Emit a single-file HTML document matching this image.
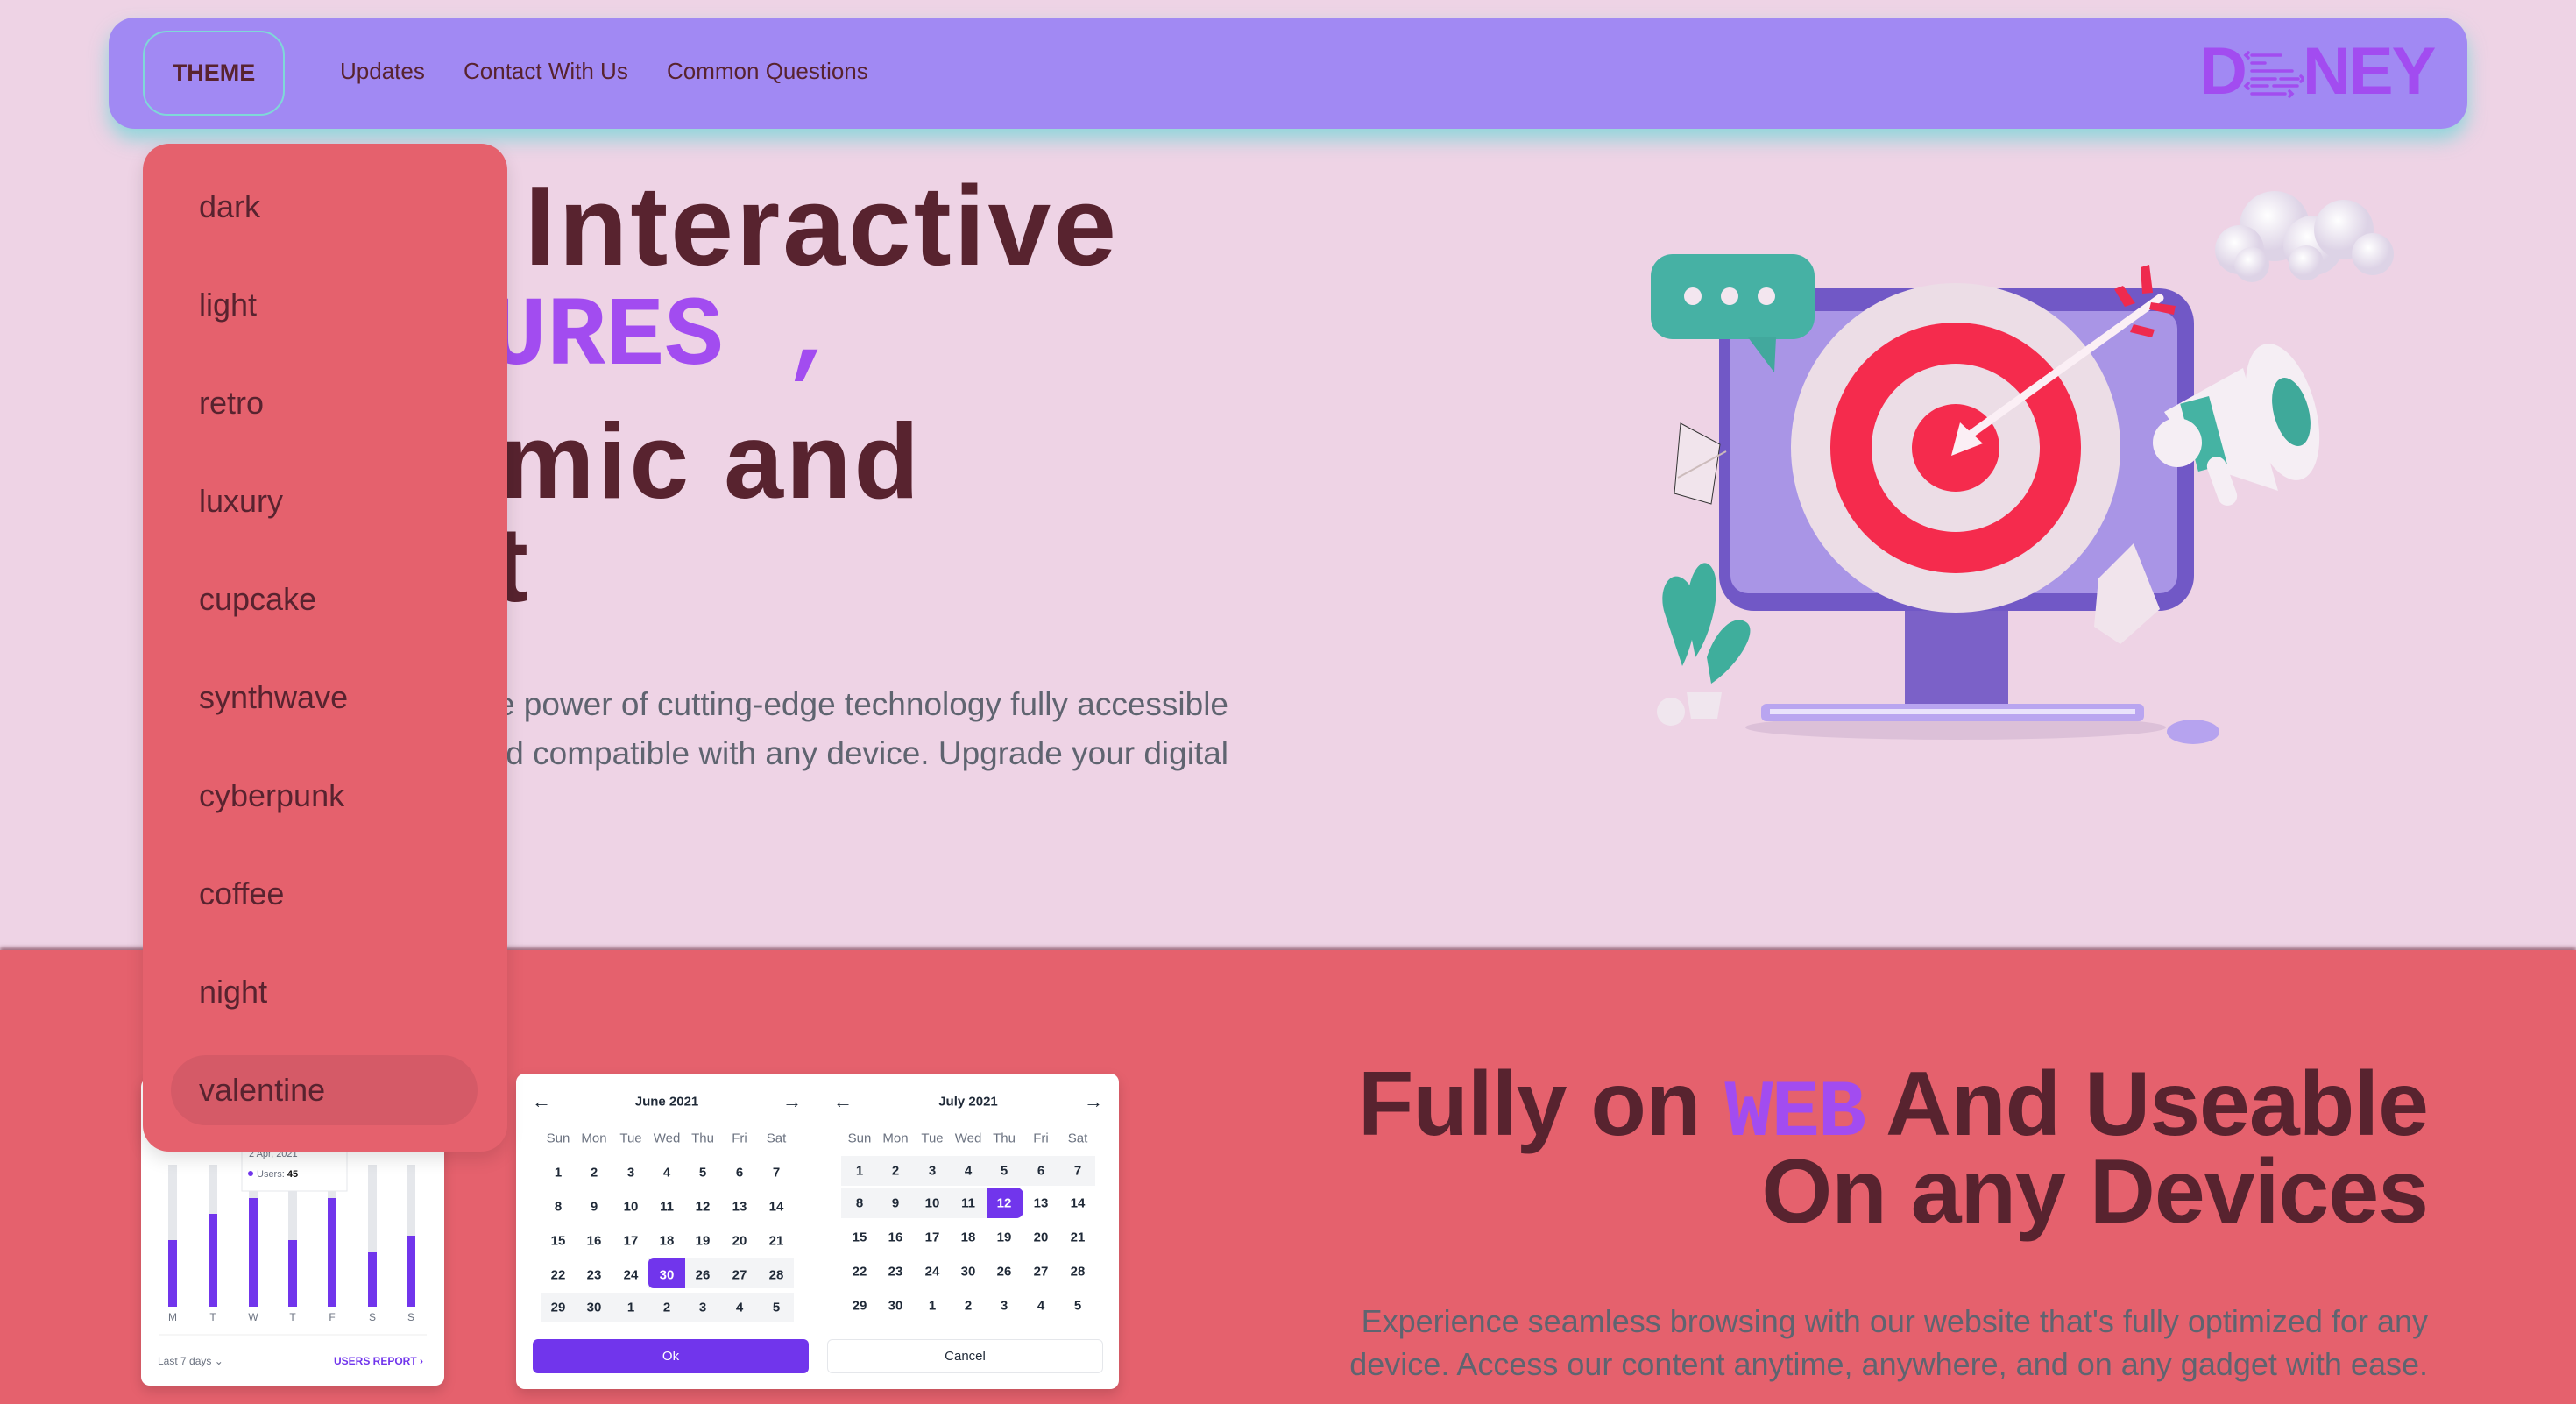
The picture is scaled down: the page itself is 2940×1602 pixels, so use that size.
<!DOCTYPE html>
<html><head><meta charset="utf-8">
<style>
*{margin:0;padding:0;box-sizing:border-box}
body{width:2940px;height:1602px;overflow:hidden;background:#eed3e5;font-family:"Liberation Sans",sans-serif;position:relative;color:#58232f}
.abs{position:absolute}
.nav{left:124px;top:20px;width:2692px;height:127px;background:#a189f3;border-radius:30px;box-shadow:0 12px 22px rgba(110,215,215,.75)}
.theme{left:163px;top:35px;width:162px;height:97px;border:2px solid #7fd8d8;border-radius:28px;font-weight:bold;font-size:27px;display:flex;align-items:center;justify-content:center;color:#58232f}
.link{top:66px;font-size:26px;color:#58232f}
.h1{position:absolute;font-weight:bold;font-size:122px;letter-spacing:3px;white-space:nowrap;text-align:right;line-height:1}
.pix{font-family:"Liberation Mono",monospace;font-weight:bold;color:#a24cf0}
.dd{left:163px;top:164px;width:416px;height:1150px;background:#e5616d;border-radius:30px;z-index:5;box-shadow:0 8px 20px rgba(0,0,0,.12)}
.dd div{position:absolute;left:64px;font-size:36px;color:#58232f}
.sec{left:0;top:1084px;width:2940px;height:518px;background:#e5616d;box-shadow:0 -3px 4px rgba(90,30,45,.55)}
.card{background:#fff;border-radius:10px;box-shadow:0 6px 14px rgba(0,0,0,.15)}
.cal{font-size:15px;color:#1f2937;font-weight:bold}
.cal span{position:absolute;transform:translate(-50%,-50%)}
.hd{color:#6b7280;font-weight:normal}
</style></head><body>

<div class="abs nav"></div>
<div class="abs theme">THEME</div>
<div class="abs link" style="left:388px">Updates</div>
<div class="abs link" style="left:529px">Contact With Us</div>
<div class="abs link" style="left:761px">Common Questions</div>

<!-- logo -->
<div class="abs" style="left:2510px;top:44px;font-weight:bold;font-size:76px;color:#a24cf0;line-height:1">D</div>
<svg class="abs" style="left:2560px;top:58px" width="70" height="56" viewBox="0 0 70 56" stroke="#a24cf0" stroke-width="3.5" stroke-linecap="round" fill="none">
<path d="M6 2l-3 3 3 3M10 5h33M10 14h15M10 23h46M10 32h27M43 32h20M66 29l3 3-3 3M6 37l-3 3 3 3M10 40h18M35 40h27M10 49h38M53 46l3 3-3 3"/></svg>
<div class="abs" style="left:2628px;top:44px;font-weight:bold;font-size:76px;color:#a24cf0;line-height:1;letter-spacing:-2px">NEY</div>

<!-- hero heading (clipped left of dropdown) -->
<div class="abs" style="left:579px;top:150px;width:900px;height:800px;overflow:hidden">
<div class="h1" style="right:202px;top:44px;font-size:129px">Discover Interactive</div>
<div class="h1 pix" style="right:519px;top:180px;font-size:112px;letter-spacing:0">FEATURES ,</div>
<div class="h1" style="right:427px;top:315px">Dynamic and</div>
<div class="h1" style="right:873px;top:433px">Content</div>
<div style="position:absolute;right:77px;top:626px;font-size:37px;color:#5f6470;text-align:right;white-space:nowrap;line-height:56px">Unlock the power of cutting-edge technology fully accessible<br>and compatible with any device. Upgrade your digital</div>
</div>

<!-- illustration -->
<svg class="abs" style="left:1860px;top:200px" width="900" height="660" viewBox="1860 200 900 660">
<defs><radialGradient id="cl" cx=".4" cy=".35"><stop offset="0" stop-color="#fff"/><stop offset="1" stop-color="#ddd3e6"/></radialGradient></defs>
<ellipse cx="2232" cy="830" rx="240" ry="14" fill="#dcc0d8"/>
<rect x="1962" y="329" width="542" height="368" rx="40" fill="#7158c6"/>
<rect x="1975" y="355" width="510" height="322" rx="20" fill="#a995e6"/>
<rect x="2174" y="697" width="118" height="106" fill="#7b61c8"/>
<rect x="2010" y="803" width="437" height="20" rx="6" fill="#b9a5f0"/>
<rect x="2020" y="809" width="417" height="6" fill="#e9e2fb"/>
<ellipse cx="2503" cy="835" rx="30" ry="14" fill="#b6a3ef"/>
<circle cx="2232" cy="511" r="188" fill="#ecdde6"/>
<circle cx="2232" cy="511" r="143" fill="#f52b4d"/>
<circle cx="2232" cy="511" r="96" fill="#ecdde6"/>
<circle cx="2232" cy="511" r="50" fill="#f52b4d"/>
<line x1="2240" y1="502" x2="2465" y2="340" stroke="#fbeff5" stroke-width="9" stroke-linecap="round"/>
<path d="M2227 520l10-38 26 24z" fill="#fbeff5"/>
<path d="M2425 350l-12-20 10-4 14 20zM2445 335l-2-30 10-3 4 32zM2455 345l28 4-2 10-28-6zM2435 370l24 6-3 9-25-6z" fill="#ef2a4e"/>
<rect x="1884" y="290" width="187" height="97" rx="25" fill="#46b1a4"/>
<path d="M1995 385l30 40 2-40z" fill="#42a89d"/>
<circle cx="1932" cy="338" r="10" fill="#f3e6ef"/><circle cx="1974" cy="338" r="10" fill="#f3e6ef"/><circle cx="2016" cy="338" r="10" fill="#f3e6ef"/>
<g fill="url(#cl)"><circle cx="2596" cy="258" r="40"/><circle cx="2556" cy="285" r="28"/><circle cx="2640" cy="280" r="34"/><circle cx="2675" cy="262" r="34"/><circle cx="2708" cy="290" r="24"/><circle cx="2632" cy="300" r="20"/><circle cx="2570" cy="302" r="20"/></g>
<path d="M2470 470l90-50 40 140-90-30z" fill="#f5eef4"/>
<ellipse cx="2605" cy="470" rx="38" ry="80" transform="rotate(-15 2605 470)" fill="#f5eef4"/>
<ellipse cx="2615" cy="470" rx="20" ry="40" transform="rotate(-15 2615 470)" fill="#3fa99a"/>
<rect x="2498" y="455" width="34" height="80" transform="rotate(-15 2515 495)" fill="#45b3a3"/>
<circle cx="2485" cy="505" r="28" fill="#f5eef4"/>
<rect x="2525" y="520" width="22" height="58" rx="11" transform="rotate(-20 2536 549)" fill="#f5eef4"/>
<path d="M1918 483l45 24-10 68-42-12z" fill="#f1e4ec" stroke="#333" stroke-width="1"/>
<path d="M1915 545l55-30" stroke="#cbb" stroke-width="2"/>
<path d="M2395 660l40-40 30 75-45 40-30-20z" fill="#f1e4ec"/>
<path d="M1900 700c-10-30 10-60 30-30 10 20 5 60-10 90zM1925 700c0-50 20-70 30-50s0 70-20 100zM1948 750c10-30 30-50 45-40s-10 50-40 70z" fill="#3fae9c"/>
<path d="M1925 790h40l-5 30h-30z" fill="#f0e6ee"/>
<circle cx="1907" cy="812" r="16" fill="#f0e6ee"/>
</svg>

<!-- bottom section -->
<div class="abs sec"></div>

<!-- chart card -->
<div class="abs card" style="left:161px;top:1230px;width:346px;height:351px"></div>
<svg class="abs" style="left:161px;top:1230px" width="346" height="351">
<g stroke-width="10" stroke-linecap="butt">
<line x1="36" y1="99" x2="36" y2="261" stroke="#e5e7eb"/><line x1="36" y1="185" x2="36" y2="261" stroke="#7135ec"/>
<line x1="82" y1="99" x2="82" y2="261" stroke="#e5e7eb"/><line x1="82" y1="155" x2="82" y2="261" stroke="#7135ec"/>
<line x1="128" y1="99" x2="128" y2="261" stroke="#e5e7eb"/><line x1="128" y1="137" x2="128" y2="261" stroke="#7135ec"/>
<line x1="173" y1="99" x2="173" y2="261" stroke="#e5e7eb"/><line x1="173" y1="185" x2="173" y2="261" stroke="#7135ec"/>
<line x1="218" y1="99" x2="218" y2="261" stroke="#e5e7eb"/><line x1="218" y1="137" x2="218" y2="261" stroke="#7135ec"/>
<line x1="264" y1="99" x2="264" y2="261" stroke="#e5e7eb"/><line x1="264" y1="198" x2="264" y2="261" stroke="#7135ec"/>
<line x1="308" y1="99" x2="308" y2="261" stroke="#e5e7eb"/><line x1="308" y1="180" x2="308" y2="261" stroke="#7135ec"/>
</g>
<rect x="115" y="75" width="120" height="54" fill="#fff" stroke="#e5e7eb"/>
<circle cx="125" cy="109" r="3" fill="#7135ec"/>
<text x="132" y="113" font-size="11" fill="#6b7280" font-family="Liberation Sans">Users: <tspan fill="#111" font-weight="bold">45</tspan></text>
<text x="123" y="90" font-size="11" fill="#6b7280" font-family="Liberation Sans">2 Apr, 2021</text>
<g font-size="12" fill="#6b7280" font-family="Liberation Sans" text-anchor="middle">
<text x="36" y="277">M</text><text x="82" y="277">T</text><text x="128" y="277">W</text><text x="173" y="277">T</text><text x="218" y="277">F</text><text x="264" y="277">S</text><text x="308" y="277">S</text></g>
<line x1="20" y1="293" x2="326" y2="293" stroke="#eee"/>
<text x="19" y="327" font-size="12" fill="#6b7280" font-family="Liberation Sans">Last 7 days ⌄</text>
<text x="220" y="327" font-size="12" fill="#7135ec" font-weight="bold" font-family="Liberation Sans">USERS REPORT ›</text>
</svg>

<!-- calendar card -->
<div class="abs card cal" style="left:589px;top:1225px;width:688px;height:360px">
<div style="position:absolute;left:151px;top:210px;width:166px;height:35px;background:#f3f4f6"></div>
<div style="position:absolute;left:151px;top:210px;width:42px;height:35px;background:#7135ec;border-radius:6px 0 0 6px"></div>
<div style="position:absolute;left:28px;top:250px;width:289px;height:34px;background:#f3f4f6"></div>
<div style="position:absolute;left:371px;top:94px;width:290px;height:34px;background:#f3f4f6"></div>
<div style="position:absolute;left:371px;top:130px;width:166px;height:35px;background:#f3f4f6"></div>
<div style="position:absolute;left:537px;top:130px;width:42px;height:35px;background:#7135ec;border-radius:0 8px 8px 0"></div>
<div style="position:absolute;left:19px;top:303px;width:315px;height:39px;background:#7135ec;border-radius:6px;color:#fff;font-weight:normal;font-size:15px;text-align:center;line-height:39px">Ok</div>
<div style="position:absolute;left:355px;top:303px;width:315px;height:39px;border:1px solid #e5e7eb;border-radius:6px;font-weight:normal;font-size:15px;text-align:center;line-height:37px">Cancel</div>
<span style="left:29px;top:32px;font-size:22px">←</span><span style="left:315px;top:32px;font-size:22px">→</span>
<span style="left:373px;top:32px;font-size:22px">←</span><span style="left:659px;top:32px;font-size:22px">→</span>
<span style="left:172px;top:32px">June 2021</span><span style="left:516px;top:32px">July 2021</span>
</div>
<script>
(function(){
var c=document.querySelector('.cal');
var hd=['Sun','Mon','Tue','Wed','Thu','Fri','Sat'];
var june=[[1,2,3,4,5,6,7],[8,9,10,11,12,13,14],[15,16,17,18,19,20,21],[22,23,24,30,26,27,28],[29,30,1,2,3,4,5]];
var h='';
var jx=[48,89,131,172,213,255,297],kx=[392,433,475,516,557,599,641];
var jy=[113,152,191,230,267],ky=[111,148,187,226,265];
for(var i=0;i<7;i++){h+='<span class="hd" style="left:'+jx[i]+'px;top:74px">'+hd[i]+'</span>';h+='<span class="hd" style="left:'+kx[i]+'px;top:74px">'+hd[i]+'</span>';}
for(var r=0;r<5;r++)for(i=0;i<7;i++){
var wj=(r==3&&i==3)?';color:#fff':'';var wk=(r==1&&i==4)?';color:#fff':'';
h+='<span style="left:'+jx[i]+'px;top:'+jy[r]+'px'+wj+'">'+june[r][i]+'</span>';
h+='<span style="left:'+kx[i]+'px;top:'+ky[r]+'px'+wk+'">'+june[r][i]+'</span>';}
c.insertAdjacentHTML('beforeend',h);
})();
</script>

<!-- bottom heading -->
<div class="abs" style="right:169px;top:1210px;font-weight:bold;font-size:104px;letter-spacing:-1px;text-align:right;white-space:nowrap;line-height:100px">Fully on <span class="pix" style="font-size:92px;line-height:0;letter-spacing:-2px">WEB</span> And Useable<br>On any Devices</div>
<div class="abs" style="right:169px;top:1483px;font-size:36px;color:#5f6470;text-align:right;white-space:nowrap;line-height:49px">Experience seamless browsing with our website that's fully optimized for any<br>device. Access our content anytime, anywhere, and on any gadget with ease.</div>

<!-- dropdown -->
<div class="abs dd">
<div style="top:51px">dark</div>
<div style="top:163px">light</div>
<div style="top:275px">retro</div>
<div style="top:387px">luxury</div>
<div style="top:499px">cupcake</div>
<div style="top:611px">synthwave</div>
<div style="top:723px">cyberpunk</div>
<div style="top:835px">coffee</div>
<div style="top:947px">night</div>
<div style="left:32px;top:1040px;width:350px;height:80px;background:#d55a67;border-radius:40px"></div>
<div style="top:1059px">valentine</div>
</div>
</body></html>
